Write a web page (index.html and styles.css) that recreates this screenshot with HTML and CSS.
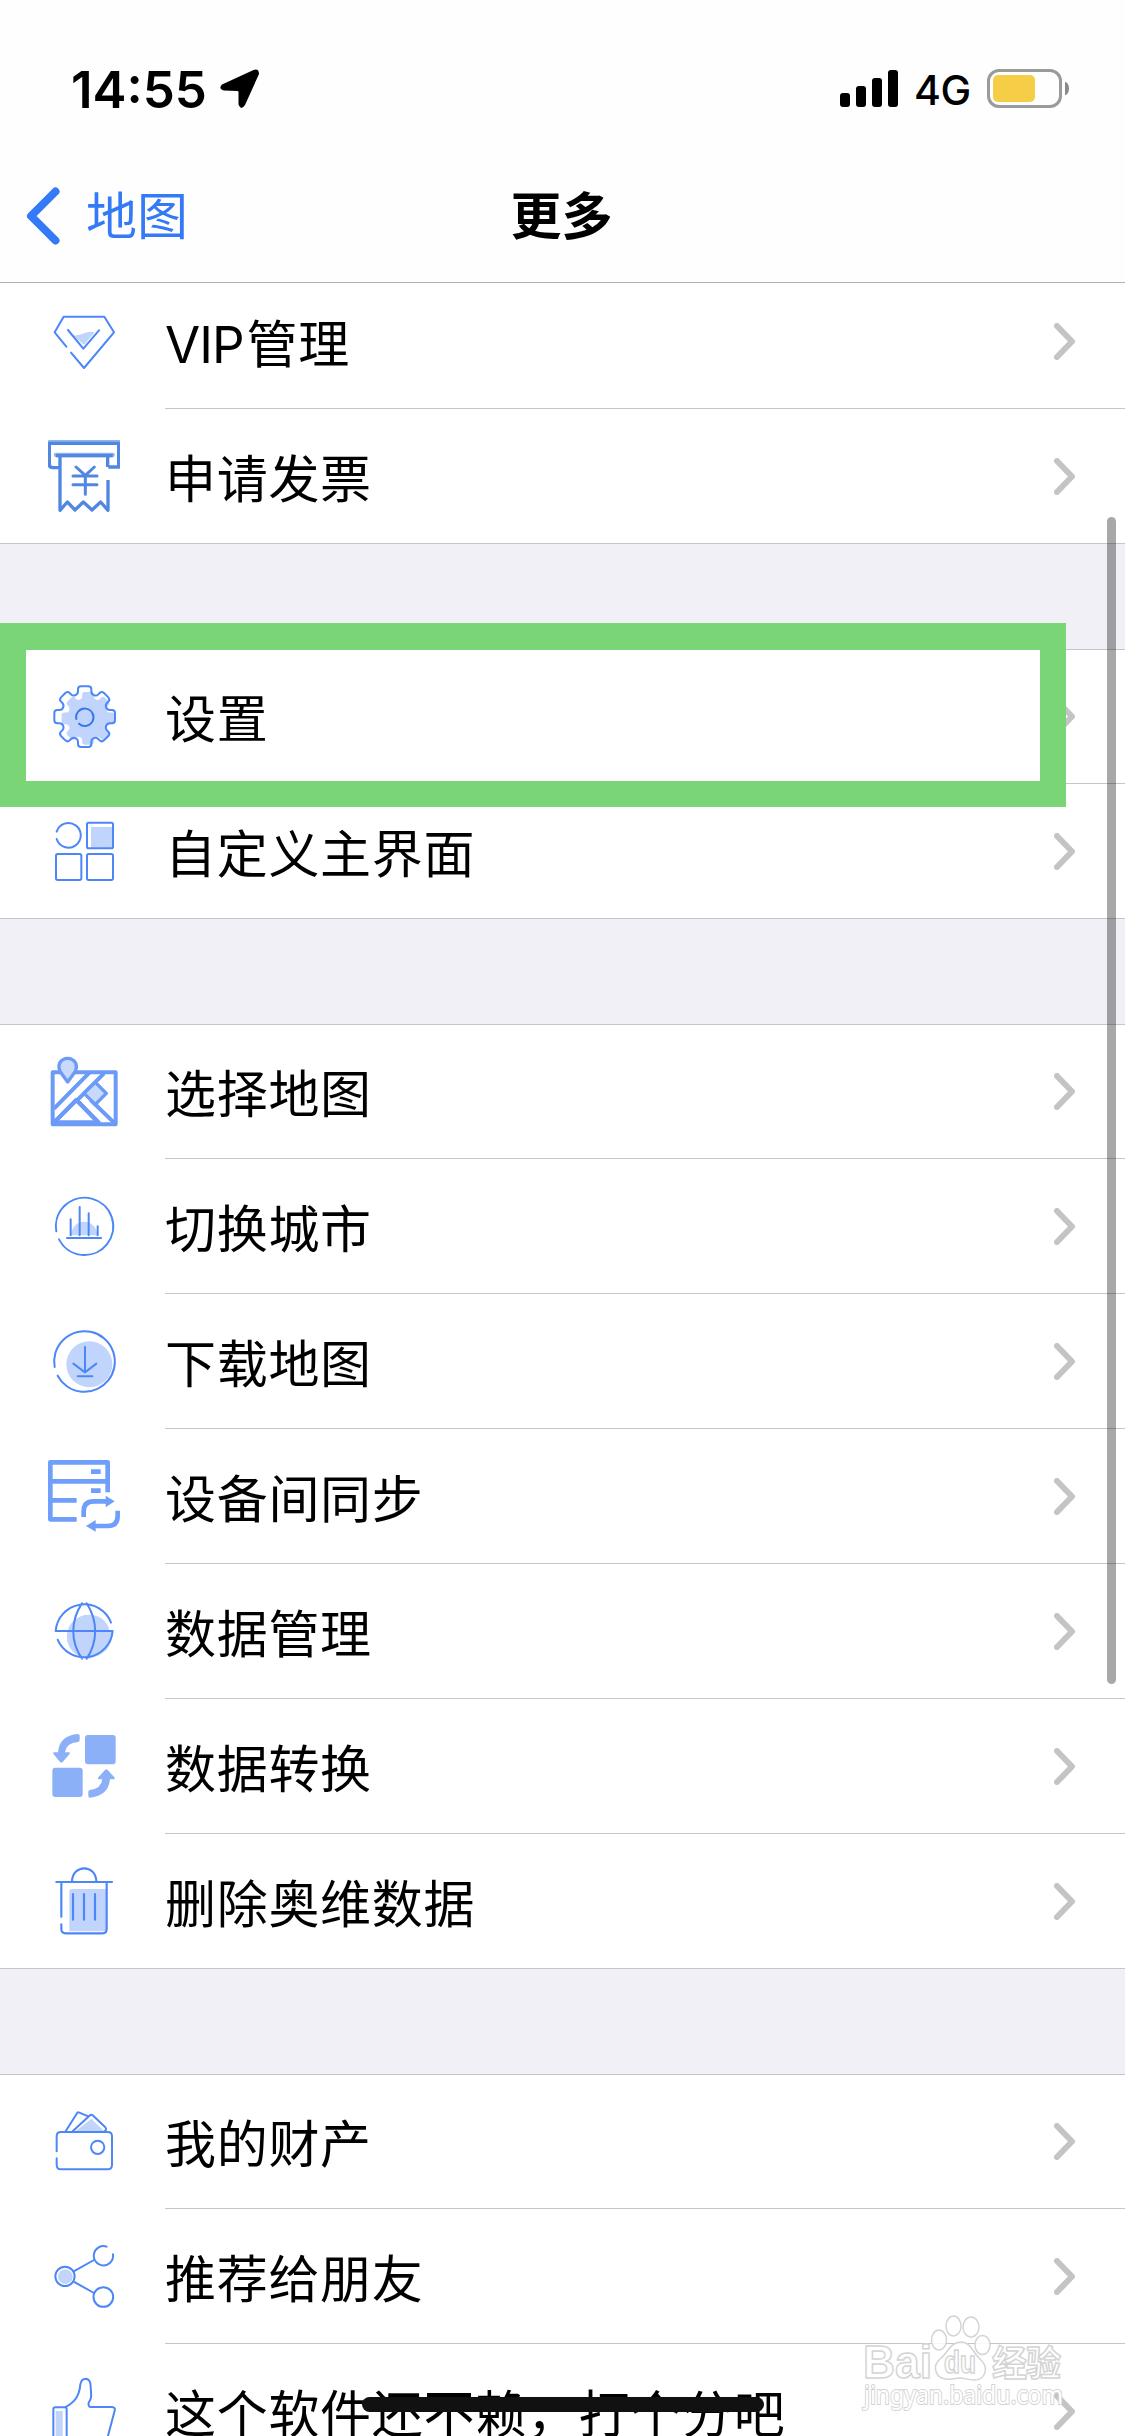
FILE: index.html
```html
<!DOCTYPE html>
<html lang="zh-CN">
<head>
<meta charset="utf-8">
<title>更多</title>
<link rel="stylesheet" href="styles.css">
</head>
<body>
<div class="screen">
  <header class="header">
    <div class="status">
      <span class="time">14:55</span>
      <svg class="locate" viewBox="0 0 40 40"><path d="M33.500 1 Q39 -1 39 5 L25 36 Q21 42 18.500 35.500 V23 Q18.500 22 17.500 22 L4 21.500 Q-2 19.500 2 15.500 Z"/></svg>
      <span class="grow"></span>
      <span class="signal"><i class="bar b1"></i><i class="bar b2"></i><i class="bar b3"></i><i class="bar b4"></i></span>
      <span class="network">4G</span>
      <span class="battery"><i class="charge"></i></span>
      <i class="nub"></i>
    </div>
    <nav class="nav">
      <a class="back"><svg class="back-arrow" viewBox="0 0 34 58"><path d="M29.500 4.500 L5 29 L29.500 53.500"/></svg><span class="back-text">地图</span></a>
      <h1 class="title">更多</h1>
    </nav>
  </header>

  <main class="list">
    <section class="group first">
      <div class="row">
        <svg class="icon" viewBox="144 75 216 216"><path class="tint" d="M219 166 Q235 168 252 160 Q268 152 284 157 L252 195 Z"/><path class="line" d="M199 200 L164 157 L191 110 H313 L342 157 L252 264 L213 218 M204 150 L250 206 L297 151"/></svg>
        <span class="label"><span class="latin">VIP</span>管理</span><svg class="chevron" viewBox="0 0 22 37"><path d="M3 3 L18 18.500 L3 34"/></svg>
      </div>
      <div class="row">
        <svg class="icon receipt" viewBox="144 480 216 216"><path class="soft" d="M150 486 H356 M168 525 H338"/><path d="M176 563 H158 Q148 563 148 553 V490 H356 V561 H325 M168 527 H338 M180 530 V691 L202 666 L225 690 L250 666 L276 690 L302 666 L324 691 V600 M323 532 V561"/><path class="yen" d="M228 561 L256 586 L283 561 M256 586 V643 M219 588 H291 M219 614 H291"/></svg>
        <span class="label">申请发票</span><svg class="chevron" viewBox="0 0 22 37"><path d="M3 3 L18 18.500 L3 34"/></svg>
      </div>
    </section>

    <section class="group">
      <div class="row">
        <svg class="icon" viewBox="144 210 216 216">
          <defs><path id="cog" d="M-20 -76 V-82 Q-20 -91 -11 -91 H11 Q20 -91 20 -82 V-76 C20 -64 34 -60 41 -67 L45 -71 Q51 -77 58 -71 L71 -58 Q77 -51 71 -45 L67 -41 C60 -34 64 -20 76 -20 H82 Q91 -20 91 -11 V11 Q91 20 82 20 H76 C64 20 60 34 67 41 L71 45 Q77 51 71 58 L58 71 Q51 77 45 71 L41 67 C34 60 20 64 20 76 V82 Q20 91 11 91 H-11 Q-20 91 -20 82 V76 C-20 64 -34 60 -41 67 L-45 71 Q-51 77 -58 71 L-71 58 Q-77 51 -71 45 L-67 41 C-60 34 -64 20 -76 20 H-82 Q-91 20 -91 11 V-11 Q-91 -20 -82 -20 H-76 C-64 -20 -60 -34 -67 -41 L-71 -45 Q-77 -51 -71 -58 L-58 -71 Q-51 -77 -45 -71 L-41 -67 C-34 -60 -20 -64 -20 -76 Z"/></defs>
          <use class="tint" href="#cog" transform="translate(264 325) scale(.87)"/><use class="line" href="#cog" transform="translate(254 320)"/><path class="line dark" d="M229 327 A26 26 0 1 1 237 341"/></svg>
        <span class="label">设置</span><svg class="chevron" viewBox="0 0 22 37"><path d="M3 3 L18 18.500 L3 34"/></svg>
      </div>
      <div class="row">
        <svg class="icon" viewBox="144 615 216 216"><path class="tint" d="M273 651 H338 V713 H273 Z"/><path class="line" d="M170 665 A37 37 0 1 1 170 687"/><rect class="line" x="261" y="638" width="78" height="77" rx="5"/><rect class="line" x="168" y="732" width="76" height="78" rx="5"/><rect class="line" x="261" y="732" width="78" height="78" rx="5"/></svg>
        <span class="label">自定义主界面</span><svg class="chevron" viewBox="0 0 22 37"><path d="M3 3 L18 18.500 L3 34"/></svg>
      </div>
      <div class="highlight"></div>
    </section>

    <section class="group">
      <div class="row">
        <svg class="icon map" viewBox="144 135 216 216"><rect x="158" y="187" width="189" height="156"/><path d="M162 296 L269 187 M162 340 L312 190 M229 270 L297 340 M272 270 L345 341"/><path class="white" d="M229 270 L162 337 H296 Z"/><path d="M160 340 L229 270 L297 340"/><path class="pale" d="M286 217 L319 250 L286 283 L252 250 Z"/><path class="pale" d="M203 216 L183 188 Q173 173 179 159 Q187 145 203 145 Q219 145 227 159 Q233 173 223 188 Z"/></svg>
        <span class="label">选择地图</span><svg class="chevron" viewBox="0 0 22 37"><path d="M3 3 L18 18.500 L3 34"/></svg>
      </div>
      <div class="row">
        <svg class="icon" viewBox="144 540 216 216"><path class="tint" d="M214 676 C215 622 289 622 292 676 Z"/><path class="line" d="M169 664 A86 86 0 1 1 177 688 M201 684 H303 M212 628 V676 M239 591 V676 M266 610 V676 M293 649 V676"/></svg>
        <span class="label">切换城市</span><svg class="chevron" viewBox="0 0 22 37"><path d="M3 3 L18 18.500 L3 34"/></svg>
      </div>
      <div class="row">
        <svg class="icon" viewBox="144 135 216 216"><circle class="tint" cx="268" cy="253" r="69"/><path class="line" d="M164 261 A91 91 0 1 1 173 287 M255 201 V274 M220 251 L255 277 L289 251 M233 289 H277"/></svg>
        <span class="label">下载地图</span><svg class="chevron" viewBox="0 0 22 37"><path d="M3 3 L18 18.500 L3 34"/></svg>
      </div>
      <div class="row">
        <svg class="icon sync" viewBox="144 540 216 216"><path d="M230 718 H151 V547 H323 V637 M151 604 H323 M151 661 H230 M273 575 H302 M273 632 H302 M251 711 V694 Q251 664 281 664 H319 M353 692 V708 Q353 738 323 738 H284"/><path class="solid" d="M317 647 L344 664 L317 682 Z M287 720 L258 738 L287 755 Z"/></svg>
        <span class="label">设备间同步</span><svg class="chevron" viewBox="0 0 22 37"><path d="M3 3 L18 18.500 L3 34"/></svg>
      </div>
      <div class="row">
        <svg class="icon" viewBox="144 135 216 216"><path class="tint" d="M268 194 A61 61 0 0 1 328 240 L338 245 Q337 312 265 326 A66 66 0 0 1 268 194 Z"/><path class="line" d="M333 218 A86 86 0 0 0 167 243 H338 A86 86 0 0 1 173 269 M246 160 C211 213 211 275 246 326 M260 160 C294 213 294 275 260 326"/></svg>
        <span class="label">数据管理</span><svg class="chevron" viewBox="0 0 22 37"><path d="M3 3 L18 18.500 L3 34"/></svg>
      </div>
      <div class="row">
        <svg class="icon convert" viewBox="144 540 216 216"><rect x="255" y="555" width="92" height="88" rx="9"/><rect x="157" y="653" width="91" height="88" rx="9"/><path d="M234 552 Q239 552 239 557 V570 Q239 575 234 576 Q198 579 195 607 H207 Q212 608 208 613 L188 636 Q184 641 180 636 L161 613 Q157 608 163 607 H174 Q178 556 234 552 Z M270 743 Q265 743 265 738 V725 Q265 720 270 720 Q304 716 307 688 H297 Q291 688 295 682 L315 660 Q319 655 323 660 L343 682 Q347 688 341 688 H330 Q325 738 270 743 Z"/></svg>
        <span class="label">数据转换</span><svg class="chevron" viewBox="0 0 22 37"><path d="M3 3 L18 18.500 L3 34"/></svg>
      </div>
      <div class="row">
        <svg class="icon" viewBox="144 135 216 216"><path class="tint" d="M208 334 V214 Q208 207 215 207 H319 V334 Z"/><path class="line thick" d="M169 186 H336 M216 184 C218 132 287 132 289 184 M184 188 V290 M184 313 V327 Q184 340 197 340 H308 Q320 340 320 327 V188 M219 222 V299 M252 222 V299 M285 222 V299"/></svg>
        <span class="label">删除奥维数据</span><svg class="chevron" viewBox="0 0 22 37"><path d="M3 3 L18 18.500 L3 34"/></svg>
      </div>
    </section>

    <section class="group">
      <div class="row">
        <svg class="icon" viewBox="144 135 216 216"><path class="tint" d="M227 213 L274 176 L312 213 Z"/><path class="line" d="M170 274 V229 Q170 216 183 216 H323 Q336 216 336 229 V314 Q336 328 323 328 H183 Q170 328 170 314 V295 M197 214 L232 158 Q234 156 238 158 L265 169 M218 214 L270 166 Q274 163 278 166 L316 202 Q321 207 315 213"/><circle class="line" cx="293" cy="262" r="20"/></svg>
        <span class="label">我的财产</span><svg class="chevron" viewBox="0 0 22 37"><path d="M3 3 L18 18.500 L3 34"/></svg>
      </div>
      <div class="row">
        <svg class="icon" viewBox="144 540 216 216"><circle class="tint" cx="196" cy="650" r="22"/><circle class="line" cx="195" cy="649" r="29"/><circle class="line" cx="310" cy="711" r="29.500"/><path class="line" d="M320 560 A29 29 0 1 0 339 583 M221 634 L282 600 M221 665 L282 699"/></svg>
        <span class="label">推荐给朋友</span><svg class="chevron" viewBox="0 0 22 37"><path d="M3 3 L18 18.500 L3 34"/></svg>
      </div>
      <div class="row">
        <svg class="icon" viewBox="144 945 216 216"><path class="tint" d="M167 1053 H188 V1150 H167 Z"/><path class="line" d="M160 1150 V1048 Q160 1042 166 1042 H194 Q200 1042 200 1048 V1150 M197 1041 C227 1024 238 1006 241 973 Q244 956 258 956 Q273 958 272 984 C276 1018 271 1018 266 1028 Q264 1041 273 1041 H336 Q347 1042 344 1052 L318 1150"/></svg>
        <span class="label">这个软件还不赖，打个分吧</span><svg class="chevron" viewBox="0 0 22 37"><path d="M3 3 L18 18.500 L3 34"/></svg>
      </div>
    </section>
  </main>

  <div class="scrollbar"></div>
  <div class="home-indicator"></div>
  <svg class="watermark" viewBox="0 0 210 104">
    <text class="brand" x="3" y="68" textLength="69" lengthAdjust="spacingAndGlyphs">Bai</text>
    <g class="paw"><ellipse cx="79" cy="30" rx="7.500" ry="10"/><ellipse cx="93.500" cy="16" rx="7.500" ry="10"/><ellipse cx="111" cy="17" rx="8" ry="10"/><ellipse cx="122.500" cy="35" rx="7.500" ry="9.500"/><path d="M101 32 C111 32 113 43 120 49 C130 58 125 70 114 70 C107 70 105 68 100 68 C94 68 91 70 86 69 C75 68 72 56 80 49 C88 43 90 32 101 32 Z"/></g>
    <text class="du" x="84" y="63" textLength="32" lengthAdjust="spacingAndGlyphs">du</text>
    <text class="exp" x="132" y="66" textLength="69">经验</text>
    <text class="url" x="4" y="94" textLength="199" lengthAdjust="spacingAndGlyphs">jingyan.baidu.com</text>
  </svg>
</div>
</body>
</html>
```
FILE: styles.css
```css
* { box-sizing: border-box; }
body { margin: 0; background: #fff; }

.screen {
  position: relative;
  width: 1125px;
  height: 2436px;
  overflow: hidden;
  background: #fff;
  color: #000;
  font-family: Inter, "Noto Sans CJK SC", sans-serif;
}

/* header */
.header {
  position: relative;
  z-index: 1;
  height: 283px;
  background: #fefefe;
  border-bottom: 1px solid #b2b2b4;
}
.status {
  display: flex;
  align-items: center;
  height: 132px;
  padding: 45px 56px 0 71px;
}
.time {
  width: 149px;
  padding-top: 2px;
  font-size: 51px;
  font-weight: 600;
  line-height: 85px;
}
.locate { width: 40px; height: 40px; }
.grow { flex: 1; }
.signal {
  display: flex;
  align-items: flex-end;
  gap: 6px;
  height: 37px;
}
.bar { width: 10px; border-radius: 3px; background: #000; }
.b1 { height: 14px; }
.b2 { height: 21px; }
.b3 { height: 29px; }
.b4 { height: 37px; }
.network {
  width: 73px;
  margin-left: 16px;
  font-size: 41px;
  font-weight: 500;
  line-height: 50px;
  letter-spacing: -.5px;
  padding-top: 3px;
}
.battery {
  width: 75px;
  height: 39px;
  padding: 3px;
  border: 3px solid #9a9a9a;
  border-radius: 12px;
}
.charge {
  display: block;
  width: 42px;
  height: 27px;
  border-radius: 5px;
  background: #f6cd46;
}
.nub {
  width: 4px;
  height: 13px;
  margin-left: 3px;
  border-radius: 0 4px 4px 0 / 0 7px 7px 0;
  background: #8a8a8a;
}
.nav {
  display: grid;
  grid-template-columns: 1fr auto 1fr;
  align-items: center;
  height: 150px;
  padding: 17px 0 0 26px;
  margin-right: 28px;
}
.back {
  display: flex;
  align-items: center;
  gap: 26px;
  color: #347af6;
  font-size: 51px;
  line-height: 74px;
}
.back-text { padding-top: 3px; }
.back-arrow {
  width: 34px;
  height: 58px;
  fill: none;
  stroke: #347af6;
  stroke-width: 8;
  stroke-linecap: round;
  stroke-linejoin: round;
}
.title {
  margin: 0;
  padding-top: 3px;
  font-size: 51px;
  font-weight: 600;
  line-height: 74px;
}

/* list */
.list {
  display: flex;
  flex-direction: column;
  gap: 105px;
  background: #f0f0f6;
}
.group {
  position: relative;
  background: #fff;
  border-top: 1px solid #c6c6c8;
}
.group.first { margin-top: -9px; }
.row {
  display: flex;
  align-items: center;
  height: 135px;
  padding: 0 49px 0 48px;
  background: linear-gradient(#c6c6c8, #c6c6c8) 165px 100% / 100% 1px no-repeat;
  border-bottom: 1px solid transparent;
  background-origin: border-box;
  background-clip: border-box;
}
.row:first-child { height: 134px; padding-bottom: 1px; }
.row:last-child, .row:nth-last-child(2):has(+ .highlight) { background-position-x: 0; }
.icon {
  flex: none;
  width: 72px;
  height: 72px;
  margin-right: 45px;
}
.label {
  flex: 1;
  padding-top: 7px;
  font-size: 51px;
  line-height: 74px;
  letter-spacing: .7px;
  white-space: nowrap;
}
.latin { margin-right: 3px; letter-spacing: -1px; }
.chevron {
  width: 22px;
  height: 37px;
  fill: none;
  stroke: #c4c4c6;
  stroke-width: 6;
  stroke-linecap: round;
  stroke-linejoin: round;
}

/* icon strokes and fills */
.tint { fill: #c1d4fb; }
.line {
  fill: none;
  stroke: #4c86f7;
  stroke-width: 6;
  stroke-linecap: round;
  stroke-linejoin: round;
}
.thick { stroke-width: 6.5; }
.dark { stroke: #3877ee; }
.receipt { fill: none; stroke: #5187e0; stroke-width: 10; stroke-linejoin: round; }
.receipt .soft { stroke: #8db4ef; stroke-width: 13; stroke-linecap: round; }
.receipt .yen { stroke-width: 9; stroke-linecap: round; }
.map { fill: none; stroke: #6c9bf7; stroke-width: 12; stroke-linejoin: round; }
.map .pale { fill: #c8d9fc; stroke-width: 10; }
.map .white { fill: #fff; }
.sync { fill: none; stroke: #6f9ffa; stroke-width: 14; stroke-linejoin: round; }
.sync .solid { fill: #6f9ffa; stroke: none; }
.convert { fill: #8bb0f8; }

/* overlays */
.highlight {
  position: absolute;
  top: -27px;
  left: 0;
  width: 1066px;
  height: 184px;
  border: solid #7ad577;
  border-width: 27px 26px 26px 26px;
}
.scrollbar {
  position: absolute;
  z-index: 2;
  top: 517px;
  left: 1107px;
  width: 9px;
  height: 1167px;
  border-radius: 5px;
  background: rgba(0, 0, 0, .34);
}
.home-indicator {
  position: absolute;
  top: 2397px;
  left: 362px;
  width: 402px;
  height: 15px;
  border-radius: 8px;
  background: #111;
}
.watermark {
  position: absolute;
  top: 2310px;
  left: 860px;
  width: 210px;
  height: 104px;
  fill: rgba(255, 255, 255, .85);
  stroke: #d4d4d4;
  stroke-width: 1.5;
  font-family: "Liberation Sans", "Noto Sans CJK SC", sans-serif;
}
.brand { font-size: 46px; font-weight: 700; }
.du { font-size: 31px; font-weight: 700; }
.exp { font-size: 35px; font-weight: 700; }
.url { font-family: "Noto Sans", sans-serif; font-size: 25px; stroke-width: 2; paint-order: stroke; fill: #fff; }
```
